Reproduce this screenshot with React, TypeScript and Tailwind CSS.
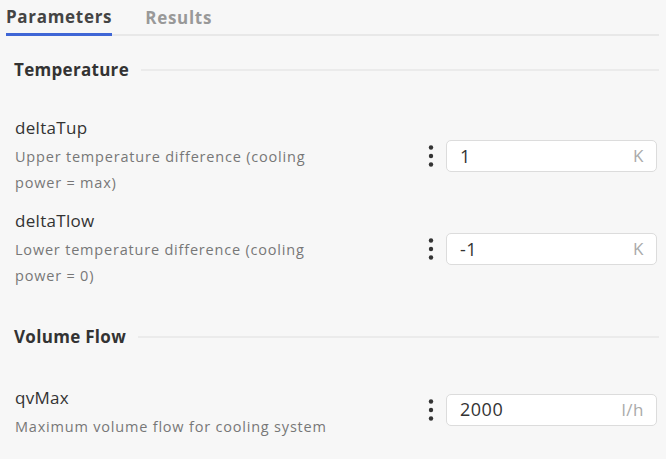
import React from 'react';

type Param = {
  name: string;
  desc: string;
  value: string;
  unit: string;
};

const temperature: Param[] = [
  { name: 'deltaTup', desc: 'Upper temperature difference (cooling power = max)', value: '1', unit: 'K' },
  { name: 'deltaTlow', desc: 'Lower temperature difference (cooling power = 0)', value: '-1', unit: 'K' },
];

const volumeFlow: Param[] = [
  { name: 'qvMax', desc: 'Maximum volume flow for cooling system', value: '2000', unit: 'l/h' },
];

function Dots() {
  return (
    <svg width="6" height="22" viewBox="0 0 6 22" className="shrink-0">
      <circle cx="3" cy="2.5" r="2.2" fill="#333" />
      <circle cx="3" cy="11" r="2.2" fill="#333" />
      <circle cx="3" cy="19.5" r="2.2" fill="#333" />
    </svg>
  );
}

function ParamRow({ p, lift }: { p: Param; lift?: boolean }) {
  return (
    <div className="flex items-center justify-between pr-[9px]">
      <div className="w-[318px]">
        <div className="text-[17px] leading-[24px] tracking-[0.3px] text-[#333]">{p.name}</div>
        <div className="mt-1 text-[14.5px] leading-[26px] tracking-[0.8px] text-[#777]">{p.desc}</div>
      </div>
      <div className={lift ? 'flex items-center gap-[12px] mb-[7px]' : 'flex items-center gap-[12px]'}>
        <Dots />
        <div className="flex h-[32px] w-[211px] items-center justify-between rounded-[5px] border border-[#dcdcdc] bg-white pl-[13px] pr-[12px]">
          <span className="text-[18px] tracking-[0.5px] text-[#333]">{p.value}</span>
          <span className="text-[17px] tracking-[0.5px] text-[#aaa]">{p.unit}</span>
        </div>
      </div>
    </div>
  );
}

function Section({ title }: { title: string }) {
  return (
    <div className="flex h-[24px] items-center gap-[12px] pr-[7px]">
      <span className="text-[17px] font-bold tracking-[0.3px] text-[#333]">{title}</span>
      <div className="h-[2px] flex-1 bg-[#ebebeb]" />
    </div>
  );
}

export default function App() {
  return (
    <div className="min-h-screen bg-[#f7f7f7] font-['Open_Sans',sans-serif]">
      <div className="px-[6px] pr-[7px]">
        <div className="flex h-[36px] gap-[33px] border-b-2 border-[#e8e8e8]">
          <div className="-mb-[2px] flex items-center border-b-[3px] border-[#3f66d6] pt-[1px] text-[17px] font-bold tracking-[0.7px] text-[#444]">
            Parameters
          </div>
          <div className="flex items-center pt-[1px] text-[17px] font-bold tracking-[0.7px] text-[#999]">Results</div>
        </div>
      </div>

      <div className="pl-[14px]">
        <div className="mt-[22px]">
          <Section title="Temperature" />
        </div>
        <div className="mt-[34px] flex flex-col gap-[13px] pl-[1px]">
          {temperature.map((p) => (
            <ParamRow key={p.name} p={p} />
          ))}
        </div>

        <div className="mt-[36px]">
          <Section title="Volume Flow" />
        </div>
        <div className="mt-[37px] flex flex-col gap-[13px] pl-[1px]">
          {volumeFlow.map((p) => (
            <ParamRow key={p.name} p={p} lift />
          ))}
        </div>
      </div>
    </div>
  );
}
